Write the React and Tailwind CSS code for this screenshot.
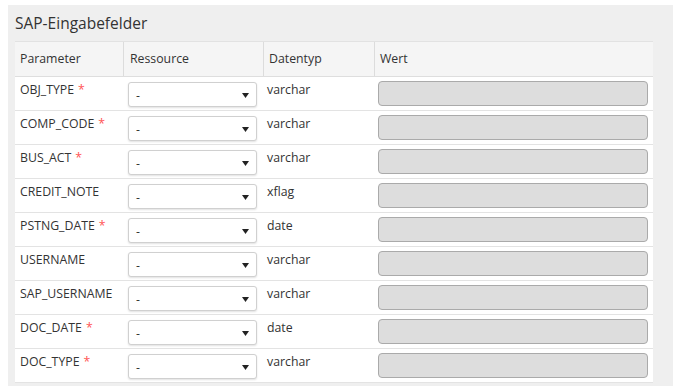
const rows = [
  ["OBJ_TYPE", true, "varchar"],
  ["COMP_CODE", true, "varchar"],
  ["BUS_ACT", true, "varchar"],
  ["CREDIT_NOTE", false, "xflag"],
  ["PSTNG_DATE", true, "date"],
  ["USERNAME", false, "varchar"],
  ["SAP_USERNAME", false, "varchar"],
  ["DOC_DATE", true, "date"],
  ["DOC_TYPE", true, "varchar"],
];

export default function App() {
  return (
    <div className="w-[673px] h-[386px] overflow-hidden bg-white pl-[8px] pt-[5px]" style={{ fontFamily: '"Open Sans", sans-serif' }}>
      <div className="bg-[#efefef] h-[400px] pl-[7px] pr-[20px]">
        <div className="h-[36px] flex items-center text-[15.5px] text-[#333] pt-[1px]">SAP-Eingabefelder</div>
        <div className="w-[638px] text-[12.3px] text-[#333]">
          <div className="grid grid-cols-[108px_140px_111px_1fr] h-[36px] bg-[#f5f5f5] border-t border-[#e2e2e2] border-b border-b-[#dedede]">
            <div className="pl-[5px] flex items-center">Parameter</div>
            <div className="pl-[6px] flex items-center border-l border-[#dcdcdc]">Ressource</div>
            <div className="pl-[5px] flex items-center border-l border-[#dcdcdc]">Datentyp</div>
            <div className="pl-[5px] flex items-center border-l border-[#dcdcdc]">Wert</div>
          </div>
          {rows.map(([name, req, type]) => (
            <div key={name} className="grid grid-cols-[108px_140px_111px_1fr] h-[34px] bg-white border-b border-[#e3e3e3]">
              <div className="pl-[5px] pt-[4px] leading-[17px]">
                {name}
                {req && <span className="text-[#ff5555] ml-[4px]">*</span>}
              </div>
              <div className="pl-[5px] pt-[5px]">
                <div className="w-[129px] h-[25px] bg-white border border-[#d0d0d0] rounded-[3px] shadow-[0_1px_2px_rgba(0,0,0,0.12)] flex items-center justify-between pl-[7px] pr-[7px]">
                  <span className="pt-[3px]">-</span>
                  <svg width="7" height="5" viewBox="0 0 7 5" className="mt-[2px]"><path d="M0 0H7L3.5 5Z" fill="#222" /></svg>
                </div>
              </div>
              <div className="pl-[4px] pt-[4px] leading-[17px]">{type}</div>
              <div className="pl-[4px] pt-[4px] pr-[5px]">
                <div className="w-[270px] h-[25px] bg-[#dddddd] border border-[#aaaaaa] rounded-[4px]"></div>
              </div>
            </div>
          ))}
        </div>
      </div>
    </div>
  );
}
